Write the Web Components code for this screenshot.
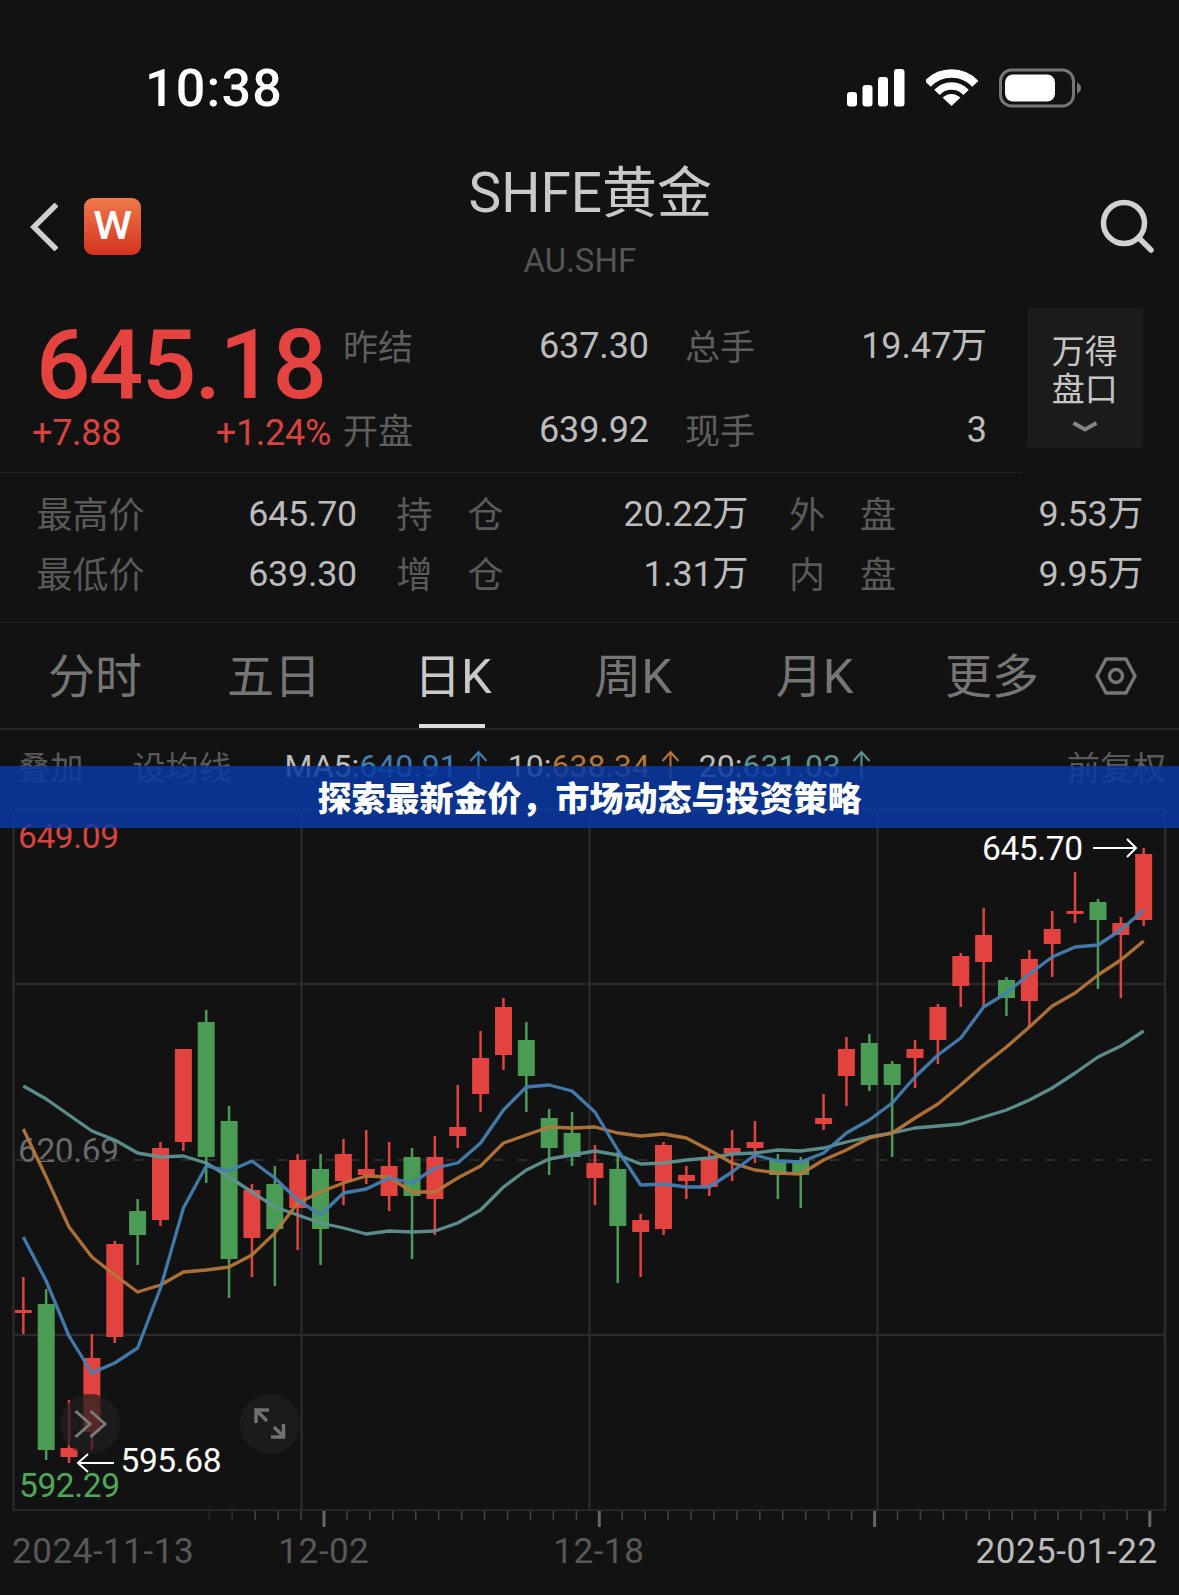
<!DOCTYPE html>
<html lang="zh-CN">
<head>
<meta charset="utf-8">
<title>SHFE黄金</title>
<style>
html,body{margin:0;padding:0;background:#121212}
body{font-family:Roboto,"Noto Sans CJK SC",sans-serif;color:#bcbcbc}
</style>
</head>
<body>
<app-screen>
  <status-bar time="10:38"></status-bar>
  <nav-header><span slot="title">SHFE黄金</span><span slot="code">AU.SHF</span></nav-header>
  <quote-panel></quote-panel>
  <stats-table></stats-table>
  <period-tabs></period-tabs>
  <ma-row></ma-row>
  <kline-chart></kline-chart>
  <date-axis></date-axis>
  <news-banner>探索最新金价，市场动态与投资策略</news-banner>
</app-screen>
<script>
const FONT='Roboto,"Noto Sans CJK SC",sans-serif';
function def(name,css,html,after){
  customElements.define(name,class extends HTMLElement{
    constructor(){super();const r=this.attachShadow({mode:'open'});
      r.innerHTML='<style>'+css+'</style>'+(typeof html==='function'?html(this):html);}
    connectedCallback(){if(after)after(this.shadowRoot,this);}
  });
}
def('app-screen',`:host{display:block;position:relative;width:1179px;height:1595px;overflow:hidden;background:#121212;font-family:${FONT}}`,'<slot></slot>');

def('status-bar',`:host{display:flex;padding:63px 98px 0 145px;box-sizing:border-box;align-items:flex-start;height:160px}
.t{font:500 52px/52px Roboto,sans-serif;color:#fff;letter-spacing:1.2px}
.i{margin-left:auto;margin-top:-1px;display:flex;align-items:center;height:52px;gap:21px}
svg{display:block}`,
`<span class="t">10:38</span><div class="i">
<svg width="58" height="38" viewBox="846 69 58 38" fill="#fff"><rect x="846" y="92" width="10" height="14.5" rx="3"/><rect x="861.5" y="85" width="10" height="21.5" rx="3"/><rect x="877" y="77" width="10" height="29.5" rx="3"/><rect x="893" y="69" width="10.5" height="37.5" rx="3"/></svg>
<svg width="52" height="38" viewBox="926 69 52 38" fill="none" stroke="#fff"><path d="M927.7 83.8A32.5 32.5 0 0 1 975.3 83.8" stroke-width="8.5"/><path d="M936.9 92.4A20 20 0 0 1 966.1 92.4" stroke-width="7.5"/><path d="M951.5 106L942.7 97.8A12 12 0 0 1 960.3 97.8Z" fill="#fff" stroke="none"/></svg>
<svg width="82" height="40" viewBox="999 67.5 82 40" fill="none"><rect x="1000.5" y="69.5" width="73" height="36" rx="11" stroke="#777" stroke-width="3"/><rect x="1005" y="74" width="50" height="27" rx="8" fill="#fff"/><path d="M1077 82Q1081 84 1081 87.5T1077 93Z" fill="#777"/></svg>
</div>`);

def('nav-header',`:host{display:grid;grid-template-columns:1fr auto 1fr;height:135px;box-sizing:border-box}
.l{display:flex;align-items:center;gap:26px;padding-left:30px;margin-top:38px;height:57px}
.logo{width:57px;height:57px;border-radius:9px;background:linear-gradient(#ee7a4b,#d5321e);display:flex;align-items:center;justify-content:center;color:#fff;font:500 38px/57px Roboto,sans-serif}
.logo span{display:block;transform:scaleX(1.16)}
.c{padding-top:6px;width:242px}
.ti{font:400 55px/54px ${FONT};color:#c9c9c9;white-space:nowrap}
.co{font:400 33px/33px Roboto,sans-serif;color:#555;margin:24px 0 0 55px;white-space:nowrap}
.r{justify-self:end;padding-right:25px;margin-top:39px}
svg{display:block}`,
`<div class="l"><svg width="28" height="48" viewBox="0 0 28 48" fill="none" stroke="#cfcfcf" stroke-width="5.5"><path d="M26.5 1.5L3.8 24L26.5 46.5"/></svg><div class="logo"><span>W</span></div></div>
<div class="c"><div class="ti"><slot name="title"></slot></div><div class="co"><slot name="code"></slot></div></div>
<div class="r"><svg width="54" height="54" viewBox="0 0 54 54" fill="none" stroke="#d2d2d2" stroke-width="5.5"><circle cx="24" cy="24" r="20.5"/><path d="M39 39L51 51" stroke-linecap="round"/></svg></div>`);

def('quote-panel',`:host{display:flex;height:178px}
.m{width:1022px;height:178px;box-sizing:border-box;border-bottom:1px solid #222;display:flex}
.p{width:343px;box-sizing:border-box;padding-top:22px;color:#e5433f}
.big{font:500 96px/96px Roboto,sans-serif;padding-left:36px;letter-spacing:-1.7px}
.ch{display:flex;justify-content:space-between;padding:0 12px 0 32px;font:400 36px/40px Roboto,sans-serif;color:#d9433f;letter-spacing:-.3px}
.g{padding-top:9px;display:grid;grid-template-columns:90px 216px 126px 212px;grid-auto-rows:84px;height:168px}
.g>*{white-space:nowrap}
.la{font:400 35px/82px "Noto Sans CJK SC",sans-serif;color:#5e5e5e}
.va{font:400 36px/84px ${FONT};color:#bcbcbc;text-align:right;letter-spacing:-.1px}
.lb{margin-left:36px}
.box{width:116.5px;height:140px;margin:13px 0 0 4.5px;background:#1b1b1b;text-align:center;color:#c6c6c6;font:400 33px/38px "Noto Sans CJK SC",sans-serif;padding-top:22px;box-sizing:border-box;border-radius:2px}
.box svg{display:block;margin:15px auto 0}`,
`<div class="m"><div class="p"><div class="big">645.18</div><div class="ch"><span>+7.88</span><span>+1.24%</span></div></div>
<div class="g">
<span class="la">昨结</span><span class="va">637.30</span><span class="la lb">总手</span><span class="va">19.47万</span>
<span class="la">开盘</span><span class="va">639.92</span><span class="la lb">现手</span><span class="va">3</span>
</div></div>
<div class="box">万得<br>盘口<svg width="26" height="11" viewBox="0 0 26 11" fill="none" stroke="#858585" stroke-width="4"><path d="M1.5 2L13 8.5L24.5 2"/></svg></div>`);

def('stats-table',`:host{display:block;height:150px;box-sizing:border-box;border-bottom:1px solid #222;padding-top:10.5px}
.g{display:grid;grid-template-columns:36.5px 108px 212.5px 39.5px 107px 244.5px 41px 107px 247px;grid-auto-rows:60px}
.g>*{white-space:nowrap}
.la{font:400 36px/56px "Noto Sans CJK SC",sans-serif;color:#5a5a5a;display:flex;justify-content:space-between}
.va{font:400 35.8px/60px ${FONT};color:#bcbcbc;text-align:right;letter-spacing:-.2px}
i{display:block}`,
`<div class="g">
<i></i><span class="la">最高价</span><span class="va">645.70</span><i></i><span class="la"><span>持</span><span>仓</span></span><span class="va">20.22万</span><i></i><span class="la"><span>外</span><span>盘</span></span><span class="va">9.53万</span>
<i></i><span class="la">最低价</span><span class="va">639.30</span><i></i><span class="la"><span>增</span><span>仓</span></span><span class="va">1.31万</span><i></i><span class="la"><span>内</span><span>盘</span></span><span class="va">9.95万</span>
</div>`);

def('period-tabs',`:host{display:flex;height:107px;box-sizing:border-box;border-bottom:2px solid #262626;padding-left:48px;align-items:flex-start}
span{font:400 47px/100px "Noto Sans CJK SC",sans-serif;color:#767676;position:relative;white-space:nowrap;height:105px}
b{font:400 49px/100px Roboto,sans-serif}
.a{color:#cacaca}
.a::after{content:"";position:absolute;left:5px;bottom:0;width:66px;height:4px;background:#dcdcdc}
svg{margin:34px 0 0 56px;display:block}`,
`<span>分时</span><span style="margin-left:85px">五日</span><span class="a" style="margin-left:93px">日<b>K</b></span><span style="margin-left:102.6px">周<b>K</b></span><span style="margin-left:103.6px">月<b>K</b></span><span style="margin-left:91.6px">更多</span>
<svg width="42" height="38" viewBox="0 0 42 38" fill="none" stroke="#777" stroke-width="3.5"><path d="M11 2H31L40 19L31 36H11L2 19Z" stroke-linejoin="round"/><circle cx="21" cy="19" r="6.5"/></svg>`);

const UP='<svg class="ar" width="19" height="30" viewBox="0 0 19 30" fill="none" stroke="currentColor" stroke-width="2"><path d="M9.5 29V2M1.5 11L9.5 2L17.5 11"/></svg>';
def('ma-row',`:host{display:flex;height:78px;padding:0 13px 0 17.5px;box-sizing:border-box;font:400 32px/72px ${FONT};white-space:nowrap}
.la{font:400 33px/72px "Noto Sans CJK SC",sans-serif;color:#5a5a5a}
.k{color:#bcbcbc}
.ma{color:#3f7fb5}.mb{color:#b5763a}.mc{color:#5f9392}
.ar{display:inline-block;vertical-align:-3px;margin-left:11px}`,
`<span class="la">叠加</span><span class="la" style="margin-left:49px">设均线</span>
<span style="margin-left:53px"><span class="k">MA5:</span><span class="ma">640.91${UP}</span></span>
<span style="margin-left:20px"><span class="k">10:</span><span class="mb">638.34${UP}</span></span>
<span style="margin-left:19px"><span class="k">20:</span><span class="mc">631.03${UP}</span></span>
<span class="la" style="margin-left:auto">前复权</span>`);

const CANDLES=[
['r',1277,1310,1313,1334],['g',1289,1304,1450,1460],['r',1400,1448,1457,1463],['r',1334,1358,1432,1450],['r',1241,1244,1337,1343],
['g',1199,1211,1235,1265],['r',1142,1148,1220,1226],['r',1049,1049,1142,1151],['g',1010,1022,1157,1183],['g',1106,1121,1259,1298],
['r',1184,1190,1238,1277],['g',1166,1184,1229,1286],['r',1154,1160,1208,1250],['g',1154,1169,1229,1265],['r',1139,1154,1181,1205],
['r',1130,1169,1175,1184],['r',1142,1166,1196,1211],['g',1148,1157,1196,1259],['r',1136,1157,1199,1235],['r',1085,1127,1136,1148],
['r',1031,1058,1094,1112],['r',998,1007,1055,1070],['g',1022,1040,1076,1112],['g',1109,1118,1148,1175],['g',1112,1133,1157,1166],
['r',1145,1163,1178,1205],['g',1152,1169,1226,1283],['r',1214,1220,1232,1277],['r',1142,1145,1229,1235],['r',1166,1175,1181,1199],
['r',1151,1157,1187,1196],['r',1130,1148,1153,1181],['r',1121,1142,1148,1163],['g',1154,1160,1175,1199],['g',1157,1160,1175,1208],
['r',1094,1118,1124,1130],['r',1037,1049,1076,1106],['g',1034,1043,1085,1091],['g',1061,1064,1085,1157],['r',1040,1049,1058,1088],
['r',1004,1007,1040,1064],['r',953,956,986,1007],['r',908,935,962,1007],['g',977,980,998,1016],['r',950,959,1001,1028],
['r',911,929,944,977],['r',872,911,914,923],['g',899,902,920,989],['r',917,923,935,998],['r',848,854,920,926]];
const MA5=[1237,1281,1336,1373,1363,1348,1288,1208,1166,1171,1161,1178,1200,1215,1193,1189,1178,1183,1168,1163,1143,1110,1087,1085,1091,1112,1150,1185,1184,1187,1187,1172,1155,1161,1162,1153,1133,1120,1103,1077,1055,1038,1007,993,974,957,947,945,930,910];
const MA10=[1129,1177,1227,1257,1275,1292,1285,1272,1270,1267,1255,1233,1203,1192,1183,1176,1177,1192,1192,1178,1166,1143,1135,1127,1128,1127,1133,1136,1134,1138,1150,1163,1170,1173,1174,1160,1150,1138,1133,1118,1104,1085,1065,1047,1027,1006,993,975,960,941];
const MA20=[1086,1099,1115,1131,1140,1153,1157,1156,1163,1177,1192,1207,1215,1223,1228,1234,1231,1232,1231,1223,1210,1187,1170,1159,1155,1151,1155,1164,1163,1160,1158,1154,1153,1150,1151,1148,1142,1137,1133,1128,1126,1124,1117,1110,1100,1088,1073,1057,1046,1031];
const X=i=>23.3+22.865*i;
function chartSvg(){
  let s='';
  const G='#2a2a2a';
  s+=`<path d="M13.5 809.5V1510.5H1165V809.5H13.5M301.5 809.5V1510.5M589.5 809.5V1510.5M877.5 809.5V1510.5M13.5 984H1165M13.5 1335H1165" fill="none" stroke="${G}" stroke-width="2.5"/>`;
  s+=`<path d="M13.5 1160H1165" stroke="${G}" stroke-width="2" stroke-dasharray="10 14"/>`;
  CANDLES.forEach((c,i)=>{
    const x=X(i),col=c[0]==='r'?'#e2433f':'#4a9c55';
    s+=`<rect x="${(x-1.25).toFixed(1)}" y="${c[1]}" width="2.5" height="${c[4]-c[1]}" fill="${col}"/>`;
    s+=`<rect x="${(x-8.5).toFixed(1)}" y="${c[2]}" width="17" height="${c[3]-c[2]}" fill="${col}"/>`;
  });
  const line=(a,col)=>`<polyline points="${a.map((y,i)=>X(i).toFixed(1)+','+y).join(' ')}" fill="none" stroke="${col}" stroke-width="3.3" stroke-linejoin="round" stroke-opacity=".95"/>`;
  s+=line(MA20,'#5f9392')+line(MA10,'#b5763a')+line(MA5,'#4580b3');
  s+=`<circle cx="90" cy="1424" r="30" fill="rgba(30,30,30,.72)"/><circle cx="270" cy="1424" r="30" fill="rgba(30,30,30,.72)"/>`;
  s+=`<path d="M75.5 1411L90 1424L75.5 1437M90.5 1411L105 1424L90.5 1437" fill="none" stroke="#7a7a7a" stroke-width="3"/>`;
  s+=`<path d="M257 1411L267 1421M274 1427L283 1436M256 1423V1410H269M283.5 1424V1437H271" fill="none" stroke="#717171" stroke-width="3.5"/>`;
  s+=`<path d="M114 1463H78M88 1454L78 1463L88 1472" fill="none" stroke="#fff" stroke-width="2"/>`;
  s+=`<path d="M1093 848H1136M1127 839L1136 848L1127 857" fill="none" stroke="#fff" stroke-width="2"/>`;
  return `<svg width="1179" height="703" viewBox="0 808 1179 703">${s}</svg>`;
}
def('kline-chart',`:host{display:block;position:relative;height:703px}
svg{display:block;position:relative}
.lb{position:absolute;font:400 33.5px/33px Roboto,sans-serif;letter-spacing:-.4px;white-space:nowrap}`,
()=>`<span class="lb" style="left:18px;top:12px;color:#d9433f">649.09</span>
<span class="lb" style="left:18px;top:326px;color:#6a6a6a">620.69</span>
<span class="lb" style="left:19px;top:661px;color:#4fa858">592.29</span>`+chartSvg()+
`<span class="lb" style="left:120.5px;top:636px;color:#fff">595.68</span>
<span class="lb" style="left:982px;top:24px;color:#fff">645.70</span>`);

def('date-axis',`:host{display:block;height:84px}
svg{display:block}
.d{display:flex;font:400 35px/35px Roboto,sans-serif;color:#585858;white-space:nowrap;margin-top:7px;padding-left:12px}
.d span{letter-spacing:.55px}`,
()=>{let t='';for(let k=-5;k<=36;k++){const x=324+22.94*k,maj=k%12===0;
  t+=`<rect x="${(x-(maj?1.5:.75)).toFixed(1)}" y="0" width="${maj?3:1.5}" height="${maj?16:9}" fill="${maj?'#666':(k<-3?'#2c2c2c':'#444')}"/>`;}
 return `<svg width="1179" height="16" viewBox="0 0 1179 16">${t}</svg><div class="d"><span>2024-11-13</span><span style="margin-left:84px">12-02</span><span style="margin-left:184px">12-18</span><span style="margin-left:331px;color:#bcbcbc">2025-01-22</span></div>`;});

def('news-banner',`:host{position:absolute;left:0;top:766px;width:1179px;height:62px;background:rgba(9,58,166,.85);display:flex;align-items:center;justify-content:center;color:#fff;font:900 34px/60px "Noto Sans CJK SC",sans-serif;white-space:nowrap}`,'<slot></slot>');
</script>
</body>
</html>
